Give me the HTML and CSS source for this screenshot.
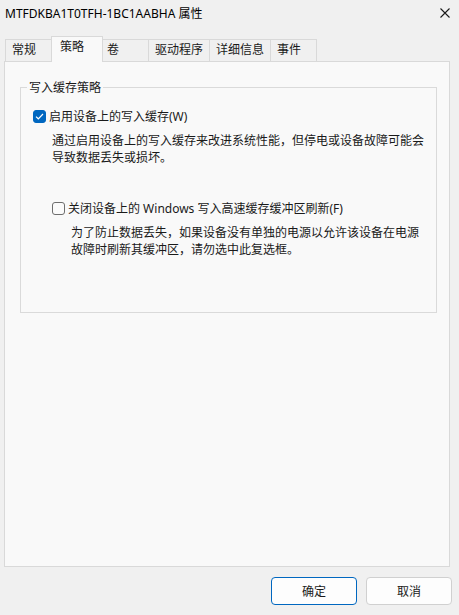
FILE: index.html
```html
<!DOCTYPE html>
<html lang="zh-CN">

<head>
    <meta charset="UTF-8">
    <meta name="viewport" content="width=device-width, initial-scale=1.0">
    <title>MTFDKBA1T0TFH-1BC1AABHA 属性</title>
    <link rel="stylesheet" href="styles.css">
</head>

<body>
    <div class="titlebar">
        <span class="title">MTFDKBA1T0TFH-1BC1AABHA 属性</span>
        <svg class="close" width="10" height="10" viewBox="0 0 10 10">
            <path d="M0.5 0.5 L9.5 9.5 M9.5 0.5 L0.5 9.5" stroke="#1a1a1a" stroke-width="1.1" fill="none"/>
        </svg>
    </div>

    <div class="tabs">
        <div class="tab">常规</div>
        <div class="tab active">策略</div>
        <div class="tab">卷</div>
        <div class="tab">驱动程序</div>
        <div class="tab">详细信息</div>
        <div class="tab last">事件</div>
    </div>

    <div class="panel">
        <fieldset class="group">
            <legend>写入缓存策略</legend>
            <label class="check first">
                <span class="box checked">
                    <svg width="9" height="7" viewBox="0 0 9 7">
                        <path d="M1 3.6 L3.3 5.8 L8 1" stroke="#fff" stroke-width="1.2" fill="none"/>
                    </svg>
                </span>
                <span>启用设备上的写入缓存(W)</span>
            </label>
            <p class="desc first">通过启用设备上的写入缓存来改进系统性能，但停电或设备故障可能会导致数据丢失或损坏。</p>

            <label class="check second">
                <span class="box"></span>
                <span>关闭设备上的 Windows 写入高速缓存缓冲区刷新(F)</span>
            </label>
            <p class="desc second">为了防止数据丢失，如果设备没有单独的电源以允许该设备在电源故障时刷新其缓冲区，请勿选中此复选框。</p>
        </fieldset>
    </div>

    <div class="btns">
        <button class="ok">确定</button>
        <button>取消</button>
    </div>
</body>

</html>
```

FILE: styles.css
```css
* {
    margin: 0;
    padding: 0;
    box-sizing: border-box;
}
body {
    width: 459px;
    height: 615px;
    background-color: #f0f0f0;
    font-family: "Noto Sans", "Noto Sans CJK SC", sans-serif;
    font-size: 12px;
    color: #1a1a1a;
    overflow: hidden;
}
.titlebar {
    height: 27px;
    padding-left: 5px;
    padding-right: 9px;
    display: flex;
    align-items: center;
    justify-content: space-between;
    color: #000;
}
.title {
    line-height: 17px;
    margin-top: -1px;
}
.close {
    margin-top: -2px;
}

/* tabs */
.tabs {
    display: flex;
    align-items: flex-end;
    height: 34px;
    padding-left: 5px;
}
.tab {
    height: 22px;
    min-width: 47px;
    padding: 0 6px;
    line-height: 20px;
    border: 1px solid #d9d9d9;
    border-bottom: none;
    border-right: none;
    background-color: #f0f0f0;
}
.tab.last {
    border-right: 1px solid #d9d9d9;
}
.tab.active {
    height: 26px;
    min-width: 52px;
    margin: 0 -2px -1px -1px;
    padding: 0 8px;
    line-height: 20px;
    background-color: #f9f9f9;
    border-right: 1px solid #d9d9d9;
    position: relative;
    z-index: 1;
}
.tab.active + .tab {
    border-left: none;
}

.panel {
    margin: 0 9px 0 4px;
    height: 506px;
    padding: 17px 12px 0 15px;
    background-color: #f9f9f9;
    border: 1px solid #d9d9d9;
}

/* group box */
.group {
    height: 234px;
    border: 1px solid #dadada;
    padding: 0;
}
.group legend {
    margin-left: 6px;
    padding: 0 2px;
    line-height: 17px;
}
.check {
    display: flex;
    align-items: center;
    line-height: 17px;
}
.check.first {
    margin-top: 12px;
    margin-left: 12px;
}
.check.second {
    margin-top: 34px;
    margin-left: 31px;
}
.box {
    width: 13px;
    height: 13px;
    margin-right: 3px;
    border: 1px solid #6e6e6e;
    border-radius: 3px;
    background-color: #fbfbfb;
    display: flex;
    align-items: center;
    justify-content: center;
}
.box.checked {
    border-color: #0067c0;
    background-color: #0067c0;
}
.desc {
    line-height: 17px;
    margin-top: 7px;
}
.desc.first {
    margin-left: 31px;
    margin-right: 10px;
}
.desc.second {
    margin-left: 50px;
    margin-right: 8px;
}

/* buttons */
.btns {
    display: flex;
    justify-content: flex-end;
    gap: 9px;
    padding-top: 10px;
    padding-right: 7px;
}
.btns button {
    width: 86px;
    height: 28px;
    font-family: inherit;
    font-size: 12px;
    color: #1a1a1a;
    background-color: #fdfdfd;
    border: 1px solid #d0d0d0;
    border-radius: 4px;
}
.btns .ok {
    border-color: #0067c0;
}
```
